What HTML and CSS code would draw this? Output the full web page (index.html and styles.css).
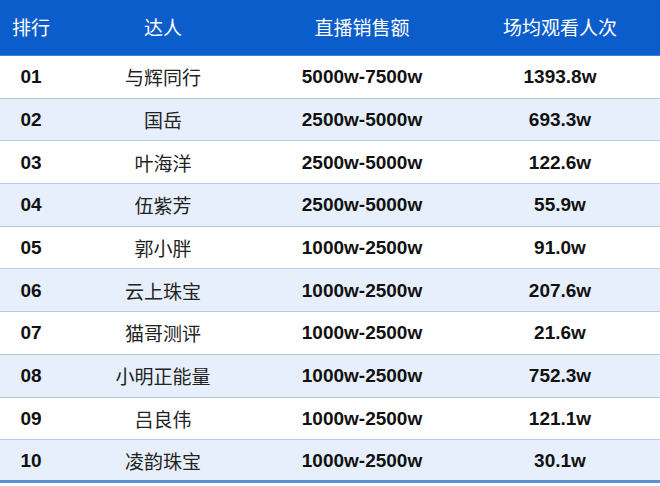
FILE: index.html
```html
<!DOCTYPE html>
<html lang="zh">
<head>
<meta charset="utf-8">
<link rel="stylesheet" href="styles.css">
</head>
<body>
<div class="table">
  <div class="row head">
    <div class="c">排行</div><div class="c">达人</div><div class="c">直播销售额</div><div class="c">场均观看人次</div>
  </div>
  <div class="row"><div class="c num">01</div><div class="c name">与辉同行</div><div class="c num">5000w-7500w</div><div class="c num">1393.8w</div></div>
  <div class="row alt"><div class="c num">02</div><div class="c name">国岳</div><div class="c num">2500w-5000w</div><div class="c num">693.3w</div></div>
  <div class="row"><div class="c num">03</div><div class="c name">叶海洋</div><div class="c num">2500w-5000w</div><div class="c num">122.6w</div></div>
  <div class="row alt"><div class="c num">04</div><div class="c name">伍紫芳</div><div class="c num">2500w-5000w</div><div class="c num">55.9w</div></div>
  <div class="row"><div class="c num">05</div><div class="c name">郭小胖</div><div class="c num">1000w-2500w</div><div class="c num">91.0w</div></div>
  <div class="row alt"><div class="c num">06</div><div class="c name">云上珠宝</div><div class="c num">1000w-2500w</div><div class="c num">207.6w</div></div>
  <div class="row"><div class="c num">07</div><div class="c name">猫哥测评</div><div class="c num">1000w-2500w</div><div class="c num">21.6w</div></div>
  <div class="row alt"><div class="c num">08</div><div class="c name">小明正能量</div><div class="c num">1000w-2500w</div><div class="c num">752.3w</div></div>
  <div class="row"><div class="c num">09</div><div class="c name">吕良伟</div><div class="c num">1000w-2500w</div><div class="c num">121.1w</div></div>
  <div class="row alt last"><div class="c num">10</div><div class="c name">凌韵珠宝</div><div class="c num">1000w-2500w</div><div class="c num">30.1w</div></div>
</div>
</body>
</html>
```
FILE: styles.css
```css
html, body {
  margin: 0;
  padding: 0;
  background: #ffffff;
}
.table {
  width: 660px;
  height: 486px;
  display: flex;
  flex-direction: column;
  font-family: "Liberation Sans", "Noto Sans CJK SC", sans-serif;
}
.row {
  display: grid;
  grid-template-columns: 62px 202px 196px 200px;
  height: 42.7px;
  box-sizing: border-box;
  border-bottom: 1.5px solid #b3cbe9;
  background: #ffffff;
}
.row.alt {
  background: #e6effb;
}
.row.head {
  height: 56px;
  background: #0b5dcb;
  border-bottom: 1.5px solid #3f7fd8;
}
.row.last {
  border-bottom: 3px solid #5b8fd6;
  height: 43px;
}
.c {
  display: flex;
  align-items: center;
  justify-content: center;
  color: #111111;
}
.head .c {
  color: #ffffff;
  font-family: "Noto Sans CJK SC", sans-serif;
  font-size: 19px;
  padding-bottom: 2px;
}
.num {
  font-weight: bold;
  font-size: 19px;
  padding-top: 1px;
}
.name {
  font-family: "Noto Sans CJK SC", sans-serif;
  font-size: 19px;
  color: #222222;
}
```
